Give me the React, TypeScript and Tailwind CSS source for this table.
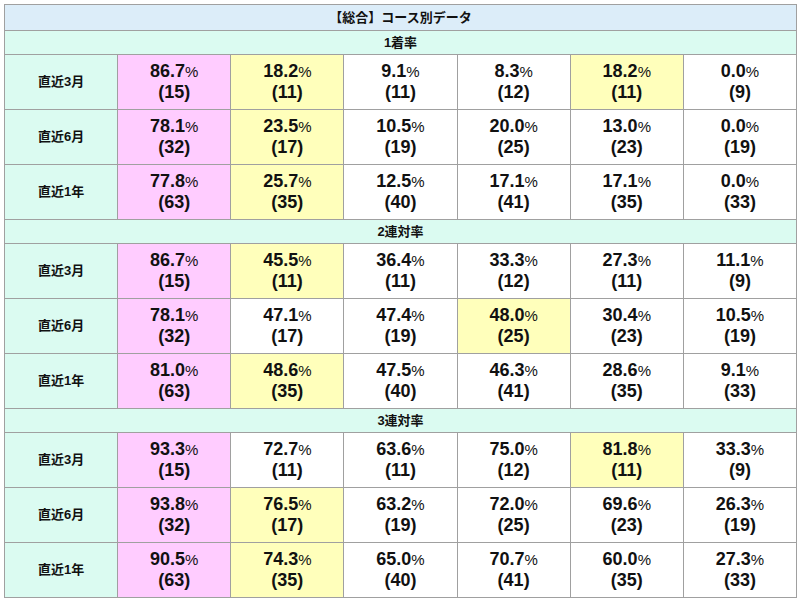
type Cell = { v: string; n: number; c?: 'p' | 'y' };
type Row = { label: string; cells: Cell[] };
type Section = { title: string; rows: Row[] };

const parse = (s: string): Cell[] =>
  s.split(' ').map((t) => {
    const m = t.match(/^([\d.]+)\((\d+)\)([py]?)$/)!;
    return { v: m[1], n: Number(m[2]), c: (m[3] || undefined) as Cell['c'] };
  });

const sections: Section[] = [
  {
    title: '1着率',
    rows: [
      { label: '直近3月', cells: parse('86.7(15)p 18.2(11)y 9.1(11) 8.3(12) 18.2(11)y 0.0(9)') },
      { label: '直近6月', cells: parse('78.1(32)p 23.5(17)y 10.5(19) 20.0(25) 13.0(23) 0.0(19)') },
      { label: '直近1年', cells: parse('77.8(63)p 25.7(35)y 12.5(40) 17.1(41) 17.1(35) 0.0(33)') },
    ],
  },
  {
    title: '2連対率',
    rows: [
      { label: '直近3月', cells: parse('86.7(15)p 45.5(11)y 36.4(11) 33.3(12) 27.3(11) 11.1(9)') },
      { label: '直近6月', cells: parse('78.1(32)p 47.1(17) 47.4(19) 48.0(25)y 30.4(23) 10.5(19)') },
      { label: '直近1年', cells: parse('81.0(63)p 48.6(35)y 47.5(40) 46.3(41) 28.6(35) 9.1(33)') },
    ],
  },
  {
    title: '3連対率',
    rows: [
      { label: '直近3月', cells: parse('93.3(15)p 72.7(11) 63.6(11) 75.0(12) 81.8(11)y 33.3(9)') },
      { label: '直近6月', cells: parse('93.8(32)p 76.5(17)y 63.2(19) 72.0(25) 69.6(23) 26.3(19)') },
      { label: '直近1年', cells: parse('90.5(63)p 74.3(35)y 65.0(40) 70.7(41) 60.0(35) 27.3(33)') },
    ],
  },
];

const bgFor = (c?: 'p' | 'y') =>
  c === 'p' ? 'bg-[#ffccff]' : c === 'y' ? 'bg-[#ffffbb]' : 'bg-white';

export default function App() {
  return (
    <div className="pt-[4px] pl-[4px] bg-white min-h-screen">
      <table
        className="w-[793px] table-fixed border-collapse text-[#111]"
        style={{ fontFamily: '"Liberation Sans", "Noto Sans CJK JP", sans-serif' }}
      >
        <tbody>
          <tr className="h-[26px]">
            <th
              colSpan={7}
              className="border border-[#a0a0a0] bg-[#dcedf9] text-[13px] font-bold p-0"
            >
              【総合】コース別データ
            </th>
          </tr>
          {sections.map((sec) => (
            <SectionRows key={sec.title} sec={sec} />
          ))}
        </tbody>
      </table>
    </div>
  );
}

function SectionRows({ sec }: { sec: Section }) {
  return (
    <>
      <tr className="h-[24px]">
        <td
          colSpan={7}
          className="border border-[#a0a0a0] bg-[#dbfbf1] text-center text-[13px] font-bold p-0"
        >
          {sec.title}
        </td>
      </tr>
      {sec.rows.map((row) => (
        <tr key={row.label} className="h-[55px]">
          <td className="border border-[#a0a0a0] bg-[#dbfbf1] text-center text-[13px] font-bold p-0">
            {row.label}
          </td>
          {row.cells.map((cell, i) => (
            <td
              key={i}
              className={`border border-[#a0a0a0] ${bgFor(cell.c)} text-center p-0 text-[18px] font-bold leading-[21px]`}
            >
              <div>
                {cell.v}
                <span className="text-[15px] font-normal">%</span>
              </div>
              <div>({cell.n})</div>
            </td>
          ))}
        </tr>
      ))}
    </>
  );
}
